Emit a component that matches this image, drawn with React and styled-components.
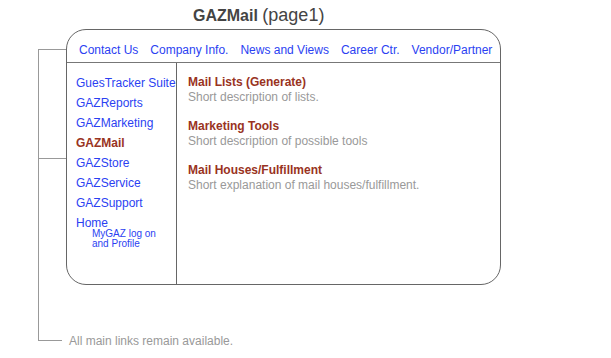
import React from "react";
import styled, { createGlobalStyle } from "styled-components";

const GlobalStyle = createGlobalStyle`
  html, body {
    margin: 0;
    padding: 0;
    background: #ffffff;
  }
  body {
    font-family: "Liberation Sans", Arial, sans-serif;
  }
`;

const Page = styled.div`
  width: 611px;
  height: 358px;
  overflow: hidden;
  box-sizing: border-box;
`;

const Title = styled.div`
  height: 29px;
  box-sizing: border-box;
  padding: 5px 0 0 193px;
  line-height: 20px;
  font-size: 16px;
  color: #444444;
  white-space: nowrap;
`;

const TitleName = styled.span`
  font-weight: bold;
`;

const TitlePage = styled.span`
  font-size: 18px;
`;

const Diagram = styled.div`
  display: flex;
  align-items: flex-start;
  padding-left: 38px;
`;

const Connector = styled.div`
  width: 27px;
  flex-shrink: 0;
  height: 292px;
  margin-top: 20px;
  border-left: 1px solid #999999;
  display: flex;
  flex-direction: column;
`;

const Tick = styled.div`
  width: 27px;
  height: 0;
  border-top: 1px solid #999999;
  margin-top: ${(props) => props.$offset || 0}px;
`;

const NoteRow = styled.div`
  margin-top: auto;
  height: 1px;
  display: flex;
  align-items: center;
  white-space: nowrap;
`;

const NoteLine = styled.div`
  width: 23px;
  flex-shrink: 0;
  height: 1px;
  background: #999999;
`;

const NoteText = styled.span`
  margin-left: 7px;
  flex-shrink: 0;
  font-size: 12px;
  line-height: 14px;
  color: #999999;
`;

const Box = styled.div`
  width: 435px;
  height: 256px;
  flex-shrink: 0;
  box-sizing: border-box;
  border: 1px solid #666666;
  border-radius: 20px;
  display: flex;
  flex-direction: column;
`;

const Nav = styled.div`
  height: 19px;
  padding: 13px 0 0 12px;
  border-bottom: 1px solid #777777;
  display: flex;
  gap: 12px;
`;

const NavLink = styled.span`
  font-size: 12px;
  line-height: 15px;
  color: #2b3ff2;
  white-space: nowrap;
`;

const Content = styled.div`
  flex: 1;
  display: flex;
`;

const Sidebar = styled.div`
  width: 110px;
  border-right: 1px solid #666666;
  padding: 10px 0 0 9px;
  box-sizing: border-box;
  display: flex;
  flex-direction: column;
`;

const SideLink = styled.span`
  font-size: 12px;
  line-height: 20px;
  white-space: nowrap;
  color: ${(props) => (props.$active ? "#993322" : "#2b3ff2")};
  font-weight: ${(props) => (props.$active ? "bold" : "normal")};
`;

const SubLinks = styled.div`
  margin-top: -4px;
  padding-left: 16px;
  display: flex;
  flex-direction: column;
`;

const SubLink = styled.span`
  font-size: 10px;
  line-height: 10px;
  color: #2b3ff2;
  white-space: nowrap;
`;

const Main = styled.div`
  flex: 1;
  padding: 12px 0 0 11px;
  display: flex;
  flex-direction: column;
  gap: 15px;
`;

const Item = styled.div`
  display: flex;
  flex-direction: column;
`;

const ItemTitle = styled.span`
  font-size: 12px;
  line-height: 14.5px;
  font-weight: bold;
  color: #993322;
`;

const ItemDesc = styled.span`
  font-size: 12px;
  line-height: 14.5px;
  color: #999999;
`;

const navLinks = [
  "Contact Us",
  "Company Info.",
  "News and Views",
  "Career Ctr.",
  "Vendor/Partner",
];

const sideLinks = [
  "GuesTracker Suite",
  "GAZReports",
  "GAZMarketing",
  "GAZMail",
  "GAZStore",
  "GAZService",
  "GAZSupport",
  "Home",
];

const items = [
  { title: "Mail Lists (Generate)", desc: "Short description of lists." },
  { title: "Marketing Tools", desc: "Short description of possible tools" },
  {
    title: "Mail Houses/Fulfillment",
    desc: "Short explanation of mail houses/fulfillment.",
  },
];

const App = () => {
  return (
    <Page>
      <GlobalStyle />
      <Title>
        <TitleName>GAZMail</TitleName> <TitlePage>(page1)</TitlePage>
      </Title>
      <Diagram>
        <Connector>
          <Tick />
          <Tick $offset={108} />
          <NoteRow>
            <NoteLine />
            <NoteText>All main links remain available.</NoteText>
          </NoteRow>
        </Connector>
        <Box>
          <Nav>
            {navLinks.map((link) => (
              <NavLink key={link}>{link}</NavLink>
            ))}
          </Nav>
          <Content>
            <Sidebar>
              {sideLinks.map((link) => (
                <SideLink key={link} $active={link === "GAZMail"}>
                  {link}
                </SideLink>
              ))}
              <SubLinks>
                <SubLink>MyGAZ log on</SubLink>
                <SubLink>and Profile</SubLink>
              </SubLinks>
            </Sidebar>
            <Main>
              {items.map((item) => (
                <Item key={item.title}>
                  <ItemTitle>{item.title}</ItemTitle>
                  <ItemDesc>{item.desc}</ItemDesc>
                </Item>
              ))}
            </Main>
          </Content>
        </Box>
      </Diagram>
    </Page>
  );
};

export default App;
